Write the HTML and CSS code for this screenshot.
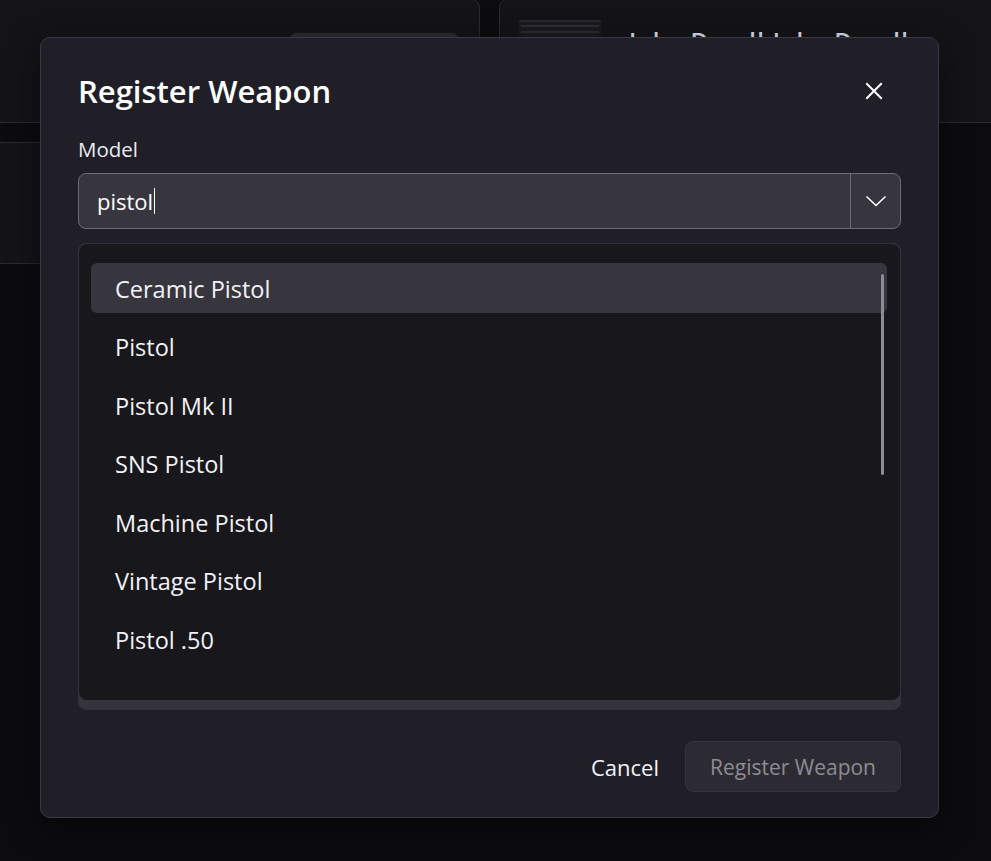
FILE: index.html
```html
<!DOCTYPE html>
<html lang="en">
<head>
<meta charset="utf-8">
<title>Register Weapon</title>
<link rel="stylesheet" href="styles.css">
</head>
<body>
<div class="backdrop">
  <div class="row row-top">
    <div class="card card-a">
      <div class="pill"></div>
    </div>
    <div class="card card-b">
      <div class="thumb">
        <span class="tl"></span><span class="tl"></span><span class="tl"></span><span class="tl"></span>
      </div>
      <div class="owner">Jake Dandl Jake Dandl</div>
    </div>
  </div>
  <div class="row row-mid">
    <div class="card card-c"></div>
  </div>
</div>

<div class="modal" role="dialog" aria-labelledby="modal-title">
  <div class="modal-head">
    <h2 id="modal-title" class="modal-title">Register Weapon</h2>
    <button class="close-btn" aria-label="Close">
      <svg width="18" height="18" viewBox="0 0 18 18"><path d="M2 2 L16 16 M16 2 L2 16" stroke="#ffffff" stroke-width="2" stroke-linecap="square" fill="none"/></svg>
    </button>
  </div>

  <label class="field-label">Model</label>
  <div class="combo">
    <div class="combo-input"><span class="combo-text">pistol</span><span class="caret"></span></div>
    <div class="combo-toggle">
      <svg width="22" height="12" viewBox="0 0 22 12"><path d="M1.5 1.5 L11 10.5 L20.5 1.5" stroke="#ffffff" stroke-width="1.6" fill="none"/></svg>
    </div>
  </div>

  <div class="list-wrap">
    <div class="list">
      <div class="option active">Ceramic Pistol</div>
      <div class="option">Pistol</div>
      <div class="option">Pistol Mk II</div>
      <div class="option">SNS Pistol</div>
      <div class="option">Machine Pistol</div>
      <div class="option">Vintage Pistol</div>
      <div class="option">Pistol .50</div>
      <div class="scrollbar"></div>
    </div>
  </div>

  <div class="modal-foot">
    <button class="btn-cancel">Cancel</button>
    <button class="btn-submit" disabled>Register Weapon</button>
  </div>
</div>
</body>
</html>
```

FILE: styles.css
```css
* { box-sizing: border-box; }

html, body {
  margin: 0;
  height: 100%;
}

body {
  background: #0c0c0e;
  font-family: "Open Sans", "Noto Sans", sans-serif;
  color: #f4f4f8;
  overflow: hidden;
}

/* background page */
.backdrop {
  display: flex;
  flex-direction: column;
  gap: 19px;
}

.row {
  display: flex;
  gap: 19px;
}

.card {
  background: #141418;
  border: 1px solid #2a2a30;
  border-radius: 8px;
}

.card-a {
  width: 492px;
  height: 124px;
  margin-left: -12px;
  margin-top: -1px;
  display: flex;
  justify-content: flex-end;
  padding: 33px 20px 0 0;
}

.pill {
  width: 170px;
  height: 40px;
  background: #2a2a30;
  border-radius: 8px;
}

.card-b {
  flex: 1;
  height: 124px;
  margin-top: -1px;
  margin-right: -12px;
  display: flex;
  align-items: flex-start;
  padding: 20px 0 0 19px;
  gap: 28px;
}

.thumb {
  width: 82px;
  height: 46px;
  background: #1a1a1e;
  border-top: 2px solid #26262b;
  display: flex;
  flex-direction: column;
  gap: 4px;
  padding: 3px 2px;
}

.tl {
  display: block;
  height: 2px;
  background: #2c2c32;
}

.owner {
  font-size: 24px;
  font-weight: 600;
  line-height: 30px;
  color: #d8dcea;
  margin-top: 6px;
  white-space: nowrap;
  letter-spacing: 1.3px;
}

.card-c {
  width: 480px;
  height: 122px;
  margin-left: -12px;
}

/* modal */
.modal {
  position: absolute;
  left: 40px;
  top: 37px;
  width: 899px;
  height: 781px;
  background: #201f28;
  border: 1px solid #3a3942;
  border-radius: 10px;
  box-shadow: 0 10px 30px rgba(0, 0, 0, 0.5);
  padding: 35px 37px 0 37px;
  display: flex;
  flex-direction: column;
}

.modal-head {
  display: flex;
  align-items: center;
  justify-content: space-between;
  height: 36px;
}

.modal-title {
  margin: 0;
  font-size: 31px;
  font-weight: 600;
  line-height: 36px;
  color: #ffffff;
}

.close-btn {
  width: 40px;
  height: 40px;
  margin-right: 7px;
  background: transparent;
  border: 0;
  padding: 0;
  display: flex;
  align-items: center;
  justify-content: center;
}

.field-label {
  margin-top: 27px;
  font-size: 20.5px;
  line-height: 26px;
  color: #ececf2;
}

.combo {
  margin-top: 11px;
  height: 56px;
  display: flex;
  background: #37363f;
  border: 1px solid #6c6b78;
  border-radius: 8px;
}

.combo-input {
  flex: 1;
  display: flex;
  align-items: center;
  padding-left: 18px;
  font-size: 22px;
  color: #ffffff;
}

.caret {
  display: inline-block;
  width: 1px;
  height: 26px;
  background: #ffffff;
  margin-left: 1px;
}

.combo-toggle {
  width: 50px;
  border-left: 1px solid #6c6b78;
  display: flex;
  align-items: center;
  justify-content: center;
}

.list-wrap {
  margin-top: 14px;
  height: 467px;
  background: #35343c;
  border: 1px solid #33323a;
  border-radius: 8px;
  overflow: hidden;
}

.list {
  position: relative;
  height: 456px;
  background: #18171c;
  border-radius: 8px;
  padding: 19px 13px 0 12px;
  overflow: hidden;
  display: flex;
  flex-direction: column;
  gap: 8.5px;
}

.option {
  flex: none;
  height: 50px;
  display: flex;
  align-items: center;
  padding-left: 24px;
  padding-top: 1px;
  font-size: 23.5px;
  color: #f2f2f6;
  border-radius: 6px;
}

.option.active {
  background: #37363f;
}

.scrollbar {
  position: absolute;
  right: 16px;
  top: 30px;
  width: 3px;
  height: 201px;
  background: #8d8c94;
  border-radius: 2px;
}

.modal-foot {
  margin-top: 31px;
  display: flex;
  justify-content: flex-end;
  align-items: center;
  gap: 26px;
}

.btn-cancel {
  background: transparent;
  border: 0;
  padding: 0;
  font-family: inherit;
  font-size: 22px;
  color: #f4f4f8;
}

.btn-submit {
  height: 51px;
  padding: 0 24px;
  background: #2c2b33;
  border: 1px solid #35343c;
  border-radius: 8px;
  font-family: inherit;
  font-size: 21px;
  color: #8c8b93;
}
```
